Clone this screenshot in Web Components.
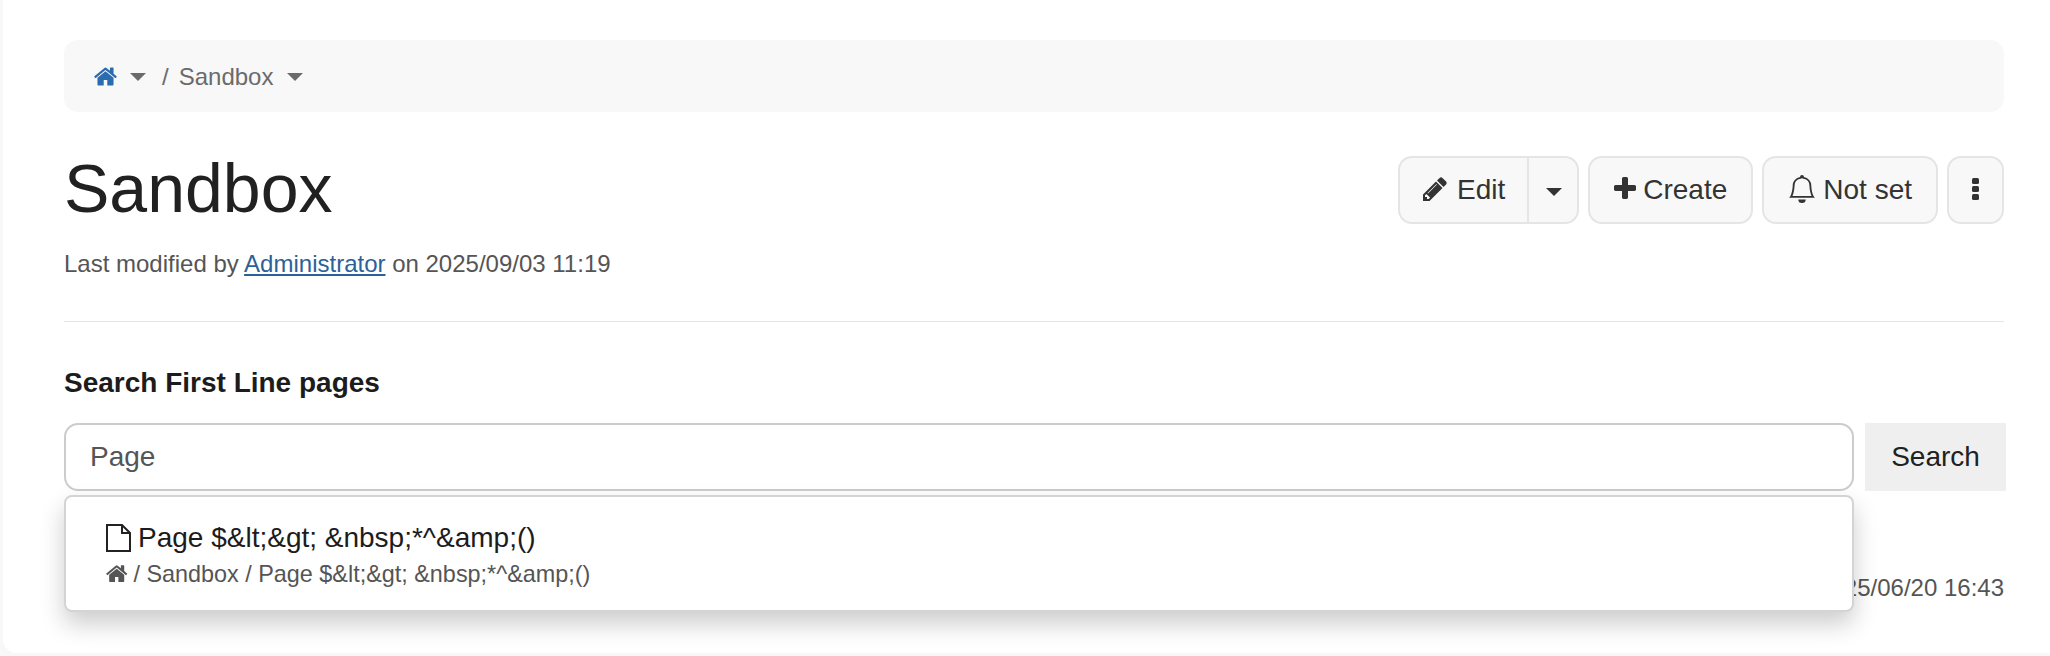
<!DOCTYPE html>
<html><head><meta charset="utf-8"><style>
html,body{margin:0;padding:0;height:100%;background:#f8f8f8;overflow:hidden}
body{font-family:"Liberation Sans",Arial,sans-serif}
</style></head><body>
<app-page></app-page>
<script>
const P={
home:'M1472 992v480q0 26-19 45t-45 19h-384v-384h-256v384h-384q-26 0-45-19t-19-45v-480q0-1 .5-3t.5-3l575-474 575 474q1 2 1 6zm223-69l-62 74q-8 9-21 11h-3q-13 0-21-7l-692-577-692 577q-12 8-24 7-13-2-21-11l-62-74q-8-10-7-23.5t11-22.5l719-599q32-26 76-26t76 26l244 204v-195q0-14 9-23t23-9h192q14 0 23 9t9 23v408l219 182q10 8 11 21.5t-7 23.5z',
pencil:'M491 1536l91-91-235-235-91 91v107h128v128h107zm523-928q0-22-22-22-10 0-17 7l-542 542q-7 7-7 17 0 22 22 22 10 0 17-7l542-542q7-7 7-17zm-54-192l416 416-832 832h-416v-416zm683 96q0 53-37 90l-166 166-416-416 166-165q36-38 90-38 53 0 91 38l235 234q37 39 37 91z',
plus:'M1600 736v192q0 40-28 68t-68 28h-416v416q0 40-28 68t-68 28h-192q-40 0-68-28t-28-68v-416h-416q-40 0-68-28t-28-68v-192q0-40 28-68t68-28h416v-416q0-40 28-68t68-28h192q40 0 68 28t28 68v416h416q40 0 68 28t28 68z'};
function def(n,html){customElements.define(n,class extends HTMLElement{constructor(){super();this.attachShadow({mode:'open'}).innerHTML=typeof html==='function'?html(this):html;}})}
def('fa-ic',e=>`<style>:host{display:inline-block;line-height:0;flex:none}svg{width:1em;height:1em;fill:currentColor;display:block}</style><svg viewBox="0 0 1792 1792"><path d="${P[e.getAttribute('n')]}"/></svg>`);
def('ui-caret',`<style>:host{display:inline-block;flex:none;width:0;height:0;border-left:8px solid transparent;border-right:8px solid transparent;border-top:8px solid currentColor}</style>`);
def('crumb-bar',`<style>:host{display:flex;align-items:center;height:72px;box-sizing:border-box;padding:1px 29px 0;background:#f8f8f8;border-radius:14px;font-size:24px;color:#6b6b6b}
.home{color:#2b6cb0;font-size:25px;display:flex}.c1{margin-left:12px}.sep{margin:0 10px 0 16px}.c2{margin-left:14px}</style>
<span class="home"><fa-ic n="home"></fa-ic></span><ui-caret class="c1"></ui-caret><span class="sep">/</span><span>Sandbox</span><ui-caret class="c2"></ui-caret>`);
def('tool-btn',`<style>:host{display:inline-flex;align-items:center;height:68px;box-sizing:border-box;background:#f8f8f8;border:2px solid #e5e5e5;border-radius:14px;font-size:28px;color:#333}</style><slot></slot>`);
def('page-head',`<style>:host{display:flex;justify-content:space-between;align-items:flex-start;margin-top:32px}
h1{margin:0;font-weight:400;font-size:68px;line-height:88px;color:#212121}
.meta{font-size:24px;color:#555;line-height:30px;margin-top:17px}a{color:#2b6199}
.tools{display:flex;gap:9px;margin-top:12px}
.split{display:flex}
fa-ic,.bell,.dots{margin-bottom:2px}
.l{border-radius:14px 0 0 14px;border-right:none;padding:0 22px 0 21px;gap:8px}
.r{border-radius:0 14px 14px 0;padding:3px 15px 0 17px}
.cr{padding:0 24px 0 21px;gap:4px}
.ns{padding:0 24px 0 25px;gap:8px}
.mo{width:57px;justify-content:center}
</style>
<div><h1>Sandbox</h1><div class="meta">Last modified by <a href="#">Administrator</a> on 2025/09/03 11:19</div></div>
<div class="tools"><div class="split"><tool-btn class="l"><fa-ic n="pencil"></fa-ic>Edit</tool-btn><tool-btn class="r"><ui-caret></ui-caret></tool-btn></div>
<tool-btn class="cr"><fa-ic n="plus"></fa-ic>Create</tool-btn>
<tool-btn class="ns"><svg class="bell" width="26" height="28" viewBox="1 0 14 16" preserveAspectRatio="none" fill="currentColor"><path d="M8 16a2 2 0 0 0 2-2H6a2 2 0 0 0 2 2zM8 1.918l-.797.161A4.002 4.002 0 0 0 4 6c0 .628-.134 2.197-.459 3.742-.16.767-.376 1.566-.663 2.258h10.244c-.287-.692-.502-1.49-.663-2.258C12.134 8.197 12 6.628 12 6a4.002 4.002 0 0 0-3.203-3.92L8 1.917zM14.22 12c.223.447.481.801.78 1H1c.299-.199.557-.553.78-1C2.68 10.2 3 6.88 3 6c0-2.42 1.72-4.44 4.005-4.901a1 1 0 1 1 1.99 0A5.002 5.002 0 0 1 13 6c0 .88.32 4.2 1.22 6z"/></svg>Not set</tool-btn>
<tool-btn class="mo"><svg class="dots" width="7" height="22" viewBox="0 0 7 22" fill="currentColor"><rect y="0" width="7" height="6" rx="1.5"/><rect y="8" width="7" height="6" rx="1.5"/><rect y="16" width="7" height="6" rx="1.5"/></svg></tool-btn></div>`);
def('search-box',`<style>:host{display:block;padding-top:44px;position:relative}
.t{font-size:28px;font-weight:700;color:#1c1c1c;line-height:34px}
.row{display:flex;gap:11px;margin-top:23px;margin-right:-2px}
.inp{flex:1;height:68px;box-sizing:border-box;border:2px solid #ccc;border-radius:14px;background:#fff;display:flex;align-items:center;padding:0 24px;font-size:28px;color:#555}
.btn{width:141px;height:68px;background:#efefef;display:flex;align-items:center;justify-content:center;font-size:28px;color:#212121}
.foot{font-size:24px;color:#555;text-align:right;margin-top:82px;line-height:30px}
.menu{position:absolute;left:0;top:173px;width:1790px;height:117px;box-sizing:border-box;background:#fff;border:2px solid #d4d4d4;border-radius:8px;box-shadow:0 12px 24px rgba(0,0,0,.2);padding:25px 40px 0}
.a{display:flex;align-items:center;gap:7px;font-size:28px;line-height:32px;color:#1c1c1c}
.a svg{flex:none;color:#222}
.b{display:flex;align-items:center;gap:5px;font-size:23.4px;line-height:28px;color:#555;margin-top:6px}
.b fa-ic{margin-left:-1px}
</style>
<div class="t">Search First Line pages</div>
<div class="row"><div class="inp">Page</div><div class="btn">Search</div></div>
<div class="foot">2025/06/20 16:43</div>
<div class="menu"><div class="a"><svg width="25" height="28" viewBox="0 0 25 28" fill="none" stroke="currentColor" stroke-width="2"><path d="M1 1h15l8 8v18H1zM16 1v8h8"/></svg>Page $&amp;lt;&amp;gt; &amp;nbsp;*^&amp;amp;()</div>
<div class="b"><fa-ic n="home"></fa-ic>/ Sandbox / Page $&amp;lt;&amp;gt; &amp;nbsp;*^&amp;amp;()</div></div>`);
def('app-page',`<style>:host{display:block;margin:0 0 3px 3px;height:653px;box-sizing:border-box;background:#fff;border-radius:0 0 0 14px;padding:40px 46px 0 61px}hr{border:0;border-top:1px solid #e5e5e5;margin:42px 0 0}</style>
<crumb-bar></crumb-bar><page-head></page-head><hr><search-box></search-box>`);
</script></body></html>
